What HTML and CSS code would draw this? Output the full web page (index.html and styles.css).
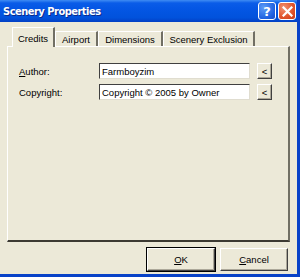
FILE: index.html
```html
<!DOCTYPE html>
<html>
<head>
<meta charset="utf-8">
<link rel="stylesheet" href="styles.css">
</head>
<body>
<div class="window">
  <div class="titlebar">
    <span class="title">Scenery Properties</span>
    <div class="tbtns">
      <div class="tbtn help">?</div>
      <div class="tbtn close">
        <svg width="11" height="11" viewBox="0 0 11 11"><path d="M1.5 1.5 L9.5 9.5 M9.5 1.5 L1.5 9.5" stroke="#fff" stroke-width="2.2" stroke-linecap="square"/></svg>
      </div>
    </div>
  </div>
  <div class="client">
    <div class="tabs">
      <div class="tab sel">Credits</div>
      <div class="tab t-air">Airport</div>
      <div class="tab t-dim">Dimensions</div>
      <div class="tab t-exc">Scenery Exclusion</div>
    </div>
    <div class="panel">
      <div class="row">
        <span class="lbl"><u>A</u>uthor:</span>
        <div class="edit">Farmboyzim</div>
        <div class="btn small">&lt;</div>
      </div>
      <div class="row">
        <span class="lbl">Copyright:</span>
        <div class="edit">Copyright © 2005 by Owner</div>
        <div class="btn small">&lt;</div>
      </div>
    </div>
    <div class="footer">
      <div class="btn big def"><u>O</u>K</div>
      <div class="btn big"><u>C</u>ancel</div>
    </div>
  </div>
</div>
</body>
</html>
```
FILE: styles.css
```css
html, body {
  margin: 0;
  padding: 0;
  background: #ece9d8;
}
.window {
  width: 297px;
  height: 274px;
  background: #ece9d8;
  border-right: 3px solid #0842c8;
  border-bottom: 3px solid #0842c8;
  overflow: hidden;
  font-family: "Liberation Sans", Arial, sans-serif;
  font-size: 9.5px;
  color: #000;
}
.titlebar {
  height: 22px;
  background: linear-gradient(#3f8cf3 0, #0a5ce8 3px, #0456e4 40%, #0152dc 80%, #0340c4 100%);
  display: flex;
  align-items: center;
  justify-content: space-between;
}
.title {
  color: #fff;
  font-family: "DejaVu Sans Condensed", "DejaVu Sans", sans-serif;
  font-stretch: condensed;
  font-weight: bold;
  font-size: 11px;
  letter-spacing: -0.5px;
  padding-left: 3px;
  text-shadow: 1px 1px 0 #0a2a8a;
}
.tbtns {
  display: flex;
  gap: 2px;
  padding-right: 1px;
}
.tbtn {
  width: 18px;
  height: 18px;
  box-sizing: border-box;
  border: 1px solid #fff;
  border-radius: 3px;
  display: flex;
  align-items: center;
  justify-content: center;
}
.help {
  background: radial-gradient(circle at 30% 30%, #5d9cf7, #1d5fe0 70%, #1a4fc8);
  color: #fff;
  font-family: "DejaVu Sans", sans-serif;
  font-weight: bold;
  font-size: 13px;
}
.close {
  background: radial-gradient(circle at 30% 30%, #f19372, #e0532a 60%, #c83a18);
}
.client {
  padding: 4px 7px 0 7px;
}
.tabs {
  display: flex;
  align-items: flex-end;
  height: 20px;
  padding-left: 5px;
}
.tab {
  height: 15px;
  box-sizing: border-box;
  border-top: 1px solid #fff;
  border-left: 1px solid #fff;
  border-right: 2px solid #716f64;
  display: flex;
  align-items: center;
  justify-content: center;
}
.tab.sel {
  width: 43px;
  padding-top: 1px;
  position: relative;
  z-index: 1;
  margin-bottom: -1px;
  height: 20px;
  background: #ece9d8;
}
.t-air { width: 43px; }
.t-dim { width: 65px; }
.t-exc { width: 92px; }
.panel {
  height: 196px;
  box-sizing: border-box;
  width: 283px;
  border-top: 1px solid #fff;
  border-left: 1px solid #fff;
  border-right: 2px solid #716f64;
  border-bottom: 2px solid #3c3a32;
  padding: 16px 0 0 11px;
  display: flex;
  flex-direction: column;
  gap: 5px;
}
.row {
  display: flex;
  align-items: center;
  height: 16px;
}
.lbl {
  width: 80px;
}
.edit {
  width: 151px;
  height: 16px;
  box-sizing: border-box;
  background: #fff;
  border-top: 1px solid #404040;
  border-left: 1px solid #404040;
  border-right: 1px solid #e0ddd0;
  border-bottom: 1px solid #e0ddd0;
  padding-left: 2px;
  display: flex;
  align-items: center;
  margin-right: 7px;
}
.btn {
  box-sizing: border-box;
  background: #ece9d8;
  border-top: 1px solid #fff;
  border-left: 1px solid #fff;
  border-right: 1px solid #404040;
  border-bottom: 1px solid #404040;
  box-shadow: inset -1px -1px 0 #aca899;
  display: flex;
  align-items: center;
  justify-content: center;
}
.small {
  width: 15px;
  height: 16px;
}
.footer {
  display: flex;
  justify-content: flex-end;
  gap: 5px;
  padding: 6px 2px 0 0;
}
.big {
  width: 68px;
  height: 23px;
}
.def {
  outline: 1px solid #000;
  outline-offset: 0;
}
```
